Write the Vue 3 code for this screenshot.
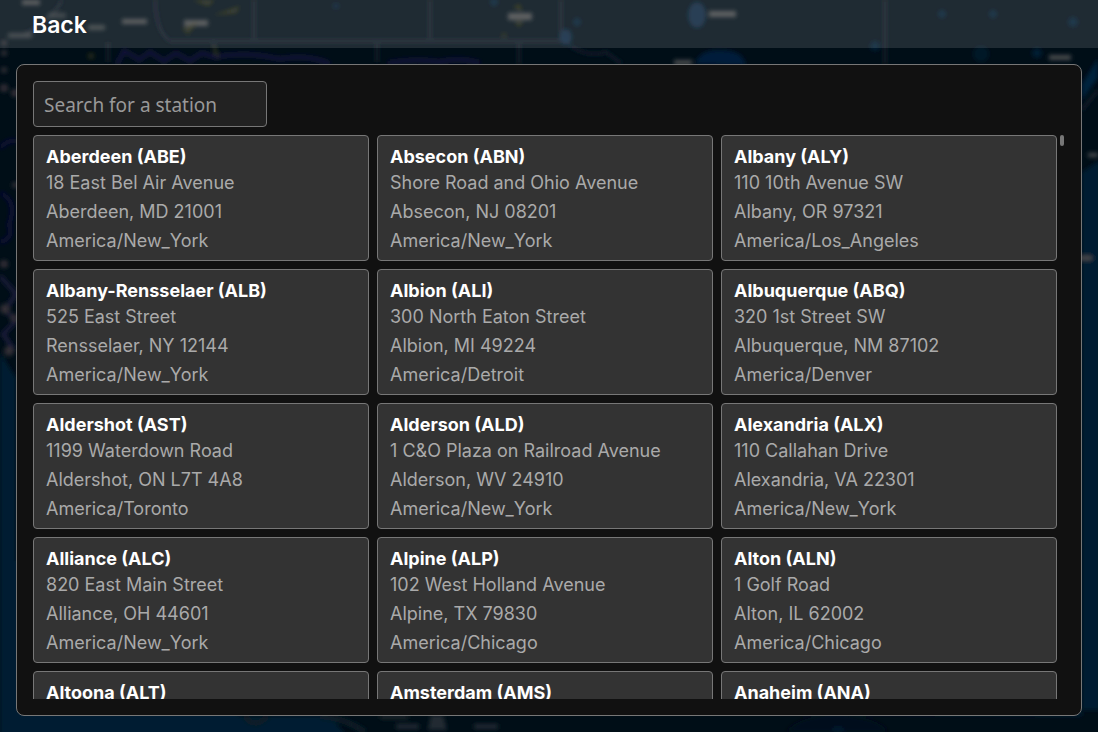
<script setup>
import { computed, ref } from 'vue'

const query = ref('')

const stations = [
  ['Aberdeen', 'ABE', '18 East Bel Air Avenue', 'Aberdeen, MD 21001', 'America/New_York'],
  ['Absecon', 'ABN', 'Shore Road and Ohio Avenue', 'Absecon, NJ 08201', 'America/New_York'],
  ['Albany', 'ALY', '110 10th Avenue SW', 'Albany, OR 97321', 'America/Los_Angeles'],
  ['Albany-Rensselaer', 'ALB', '525 East Street', 'Rensselaer, NY 12144', 'America/New_York'],
  ['Albion', 'ALI', '300 North Eaton Street', 'Albion, MI 49224', 'America/Detroit'],
  ['Albuquerque', 'ABQ', '320 1st Street SW', 'Albuquerque, NM 87102', 'America/Denver'],
  ['Aldershot', 'AST', '1199 Waterdown Road', 'Aldershot, ON L7T 4A8', 'America/Toronto'],
  ['Alderson', 'ALD', '1 C&O Plaza on Railroad Avenue', 'Alderson, WV 24910', 'America/New_York'],
  ['Alexandria', 'ALX', '110 Callahan Drive', 'Alexandria, VA 22301', 'America/New_York'],
  ['Alliance', 'ALC', '820 East Main Street', 'Alliance, OH 44601', 'America/New_York'],
  ['Alpine', 'ALP', '102 West Holland Avenue', 'Alpine, TX 79830', 'America/Chicago'],
  ['Alton', 'ALN', '1 Golf Road', 'Alton, IL 62002', 'America/Chicago'],
  ['Altoona', 'ALT'],
  ['Amsterdam', 'AMS'],
  ['Anaheim', 'ANA'],
].map(([name, code, ...lines]) => ({ name, code, lines }))

const visible = computed(() => {
  const q = query.value.trim().toLowerCase()
  return stations.filter((s) => `${s.name} ${s.code}`.toLowerCase().includes(q))
})
</script>

<template>
  <div class="page">
    <svg class="map" viewBox="0 0 1098 732" preserveAspectRatio="none" aria-hidden="true">
      <defs>
        <filter id="soft" x="-5%" y="-5%" width="110%" height="110%">
          <feGaussianBlur stdDeviation="2" />
        </filter>
      </defs>
      <rect width="1098" height="732" fill="#000e17" />
      <g filter="url(#soft)">
        <path d="M0 352 L16 378 V560 L240 716 H330 L350 740 H0 Z M506 710 H1100 V160 L1082 172 V716 Z" fill="#001d33" />
        <path d="M695 64 Q700 49 720 50 Q744 50 746 66 Z" fill="#001d3a" />
        <path d="M1082 84 L1098 58 V78 L1082 100 Z" fill="#00203d" />
        <path d="M786 732 Q800 715 835 715 Q878 716 888 732 Z" fill="#03101a" />
        <path d="M830 732 Q838 722 846 732 Z" fill="#001d33" />
        <path d="M245 716 Q254 730 268 716 M320 716 Q345 718 365 732" fill="none" stroke="#0a1a25" stroke-width="6" />
        <g fill="none" stroke="#121e2a" stroke-width="3">
          <path d="M62 0 Q52 20 25 34 M155 0 Q156 32 170 41 H570 M254 0 V42 M430 0 V42 M561 0 V42 M519 42 V64 M108 42 V62 M885 0 V64 M213 42 L218 60 M377 42 V62 M570 46 Q590 58 606 52 L622 64 M1082 110 L1098 90" />
        </g>
        <g fill="none" stroke="#15133c" stroke-width="4">
          <path d="M117 64 L124 51 Q134 56 139 60 L150 52 L164 61 L176 53 L190 61 L202 53 L214 57 Q245 51 280 59 Q308 54 330 64 M388 63 Q415 58 440 62 Q458 57 480 63" />
          <path d="M0 148 Q8 139 16 141 M0 193 Q18 200 9 225 Q14 239 0 242" stroke="#0f1038" />
          <path d="M0 276 L16 294 L5 310 L16 321 L3 334 L14 350" stroke="#1d1a3c" />
        </g>
        <g fill="#302e34">
          <circle cx="4" cy="43" r="3" /><circle cx="4" cy="53" r="3" />
          <circle cx="4" cy="70" r="3" /><circle cx="4" cy="88" r="4" />
          <circle cx="15" cy="93" r="4" /><circle cx="15" cy="185" r="3" />
          <circle cx="4" cy="264" r="4" /><circle cx="5" cy="309" r="5" />
          <circle cx="14" cy="318" r="4" /><circle cx="9" cy="351" r="5" />
        </g>
        <g fill="#484c4e">
          <rect x="22" y="0" width="18" height="5" /><rect x="48" y="13" width="18" height="5" opacity="0.6" />
          <rect x="8" y="33" width="24" height="5" opacity="0.7" /><rect x="88" y="25" width="17" height="5" opacity="0.8" />
          <rect x="122" y="19" width="25" height="5" /><rect x="184" y="20" width="24" height="6" />
          <rect x="508" y="13" width="24" height="7" /><rect x="709" y="11" width="27" height="6" />
          <rect x="674" y="60" width="18" height="5" /><rect x="1049" y="55" width="22" height="5" />
          <rect x="1088" y="153" width="10" height="4" /><rect x="1078" y="256" width="14" height="4" />
          <rect x="380" y="715" width="28" height="4" fill="#1c252b" /><rect x="396" y="724" width="23" height="5" fill="#242c32" />
          <path d="M431 715 H443 L447 730 H428 Z" fill="#222c33" />
          <rect x="474" y="724" width="24" height="5" fill="#242c32" />
        </g>
        <g fill="#413e13" opacity="0.6">
          <path d="M182 28 L198 22 L188 34 Z M193 0 H215 L208 6 Z M213 15 L226 11 L240 6 L236 13 Z M513 7 L520 4 L522 12 Z M514 21 H524 L519 27 Z M213 42 L220 58 L214 54 Z" />
          <circle cx="91" cy="56" r="3" /><circle cx="504" cy="35" r="2" />
        </g>
        <g fill="#06243f" opacity="0.7">
          <ellipse cx="697" cy="15" rx="9" ry="13" fill="#0b2f50" /><ellipse cx="566" cy="37" rx="6" ry="8" fill="#0b2f50" />
          <circle cx="577" cy="22" r="4" /><circle cx="494" cy="2" r="4" />
          <circle cx="336" cy="6" r="3" /><circle cx="942" cy="14" r="4" /><circle cx="993" cy="14" r="4" />
          <circle cx="1073" cy="22" r="5" /><circle cx="1037" cy="53" r="5" />
          <circle cx="875" cy="46" r="5" /><circle cx="981" cy="54" r="8" opacity="0.6" />
        </g>
      </g>
    </svg>

    <header class="bar">
      <a class="back" href="#">Back</a>
    </header>

    <main class="panel">
      <input v-model="query" class="search" type="text" placeholder="Search for a station" aria-label="Search for a station" />
      <div class="results">
        <ul class="grid">
          <li v-for="s in visible" :key="s.code" class="card">
            <h2 class="name">{{ s.name }} ({{ s.code }})</h2>
            <p v-for="line in s.lines" :key="line" class="line">{{ line }}</p>
          </li>
        </ul>
        <div class="track"><div class="thumb"></div></div>
      </div>
    </main>
  </div>
</template>

<style>
body {
  background: #000e17;
}
</style>

<style scoped>
.page {
  position: relative;
  isolation: isolate;
  display: flex;
  flex-direction: column;
  height: 100vh;
  overflow: hidden;
  box-sizing: border-box;
  color: #fff;
  font-family: Inter, "Noto Sans", sans-serif;
}
.map {
  position: absolute;
  inset: 0;
  z-index: -1;
  width: 100%;
  height: 100%;
}
.bar {
  display: flex;
  align-items: center;
  flex: none;
  box-sizing: border-box;
  height: 48px;
  padding: 2px 32px 0;
  background: rgba(255, 255, 255, 0.12);
}
.back {
  color: #fff;
  font-size: 23px;
  line-height: 32px;
  font-weight: 600;
  text-decoration: none;
}
.panel {
  display: flex;
  flex-direction: column;
  gap: 8px;
  flex: 1;
  min-height: 0;
  margin: 16px;
  padding: 16px;
  border: 1px solid #777;
  border-radius: 8px;
  background: #111;
}
.search {
  flex: none;
  align-self: flex-start;
  box-sizing: border-box;
  width: 234px;
  height: 46px;
  padding: 2px 10px 0;
  border: 1px solid #777;
  border-radius: 4px;
  background: #222;
  color: #fff;
  font-family: "Noto Sans", sans-serif;
  font-size: 19px;
}
.search::placeholder {
  color: #999;
}
.results {
  display: flex;
  gap: 3px;
  flex: 1;
  min-height: 0;
  padding-right: 1px;
}
.grid {
  display: grid;
  grid-template-columns: repeat(3, minmax(0, 1fr));
  grid-auto-rows: 126px;
  gap: 8px;
  flex: 1;
  margin: 0;
  padding: 0;
  overflow-y: auto;
  scrollbar-width: none;
  list-style: none;
}
.card {
  box-sizing: border-box;
  padding: 7px 12px 0;
  border: 1px solid #777;
  border-radius: 4px;
  background: #333;
}
.name {
  margin: 0;
  font-size: 18px;
  line-height: 28px;
  font-weight: 700;
}
.line {
  margin: 0;
  color: #aaa;
  font-size: 18px;
  line-height: 29px;
}
.name + .line {
  margin-top: -3px;
}
.track {
  flex: none;
  width: 4px;
}
.thumb {
  height: 11px;
  border-radius: 2px;
  background: #777;
}
</style>
